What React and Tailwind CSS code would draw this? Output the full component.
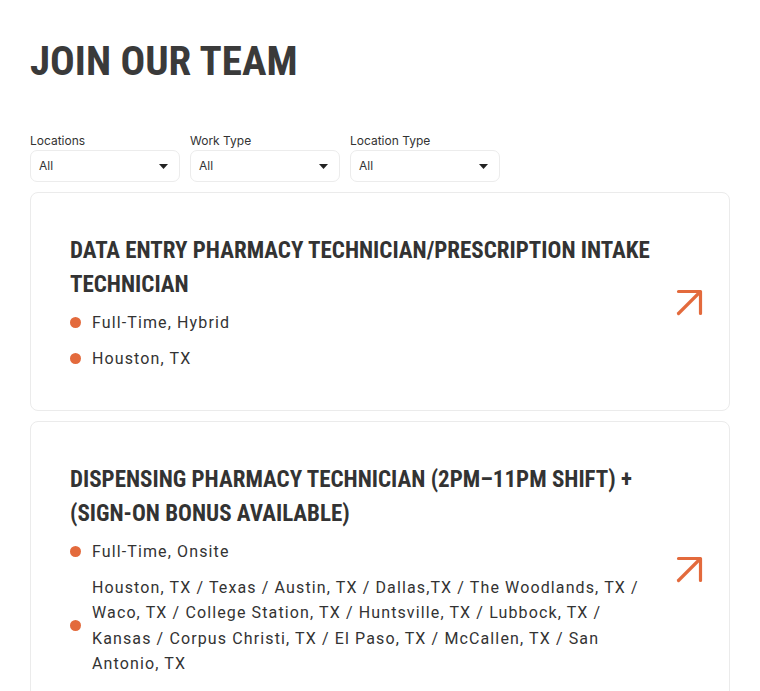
import React from "react";

const Caret = () => (
  <svg width="9" height="5" viewBox="0 0 9 5" className="shrink-0">
    <path d="M0 0 L9 0 L4.5 5 Z" fill="#222" />
  </svg>
);

const Arrow = () => (
  <svg width="27" height="27" viewBox="0 0 27 27" fill="none" stroke="#e36a3c" strokeWidth="3.2" strokeLinecap="round" strokeLinejoin="round">
    <path d="M2.5 24.5 L24 3" />
    <path d="M2.5 2.5 L24.5 2.5 L24.5 24.5" />
  </svg>
);

const Select = ({ label }) => (
  <div className="flex flex-col w-[150px]">
    <span className="text-[12px] leading-[16px] text-[#333] mb-[1px]" style={{ fontFamily: "Inter, Roboto, sans-serif" }}>{label}</span>
    <div className="h-[32px] rounded-[7px] border border-[#ececec] flex items-center justify-between pl-[8px] pr-[11px] bg-white">
      <span className="text-[12px] text-[#333]" style={{ fontFamily: "Inter, Roboto, sans-serif" }}>All</span>
      <Caret />
    </div>
  </div>
);

const Bullet = ({ children }) => (
  <div className="flex items-center gap-[11px]">
    <span className="w-[11px] h-[11px] rounded-full bg-[#e36a3c] shrink-0" />
    <span className="max-w-[550px] text-[16px] leading-[25.5px] tracking-[0.07em] text-[#333]" style={{ fontFamily: "Roboto, sans-serif" }}>{children}</span>
  </div>
);

const Card = ({ title, items }) => (
  <div className="rounded-[8px] border border-[#ebebeb] bg-white flex items-center pl-[39px] pr-[26px] pt-[41px] pb-[39px]">
    <div className="flex-1 max-w-[590px]">
      <h2 className="text-[23px] leading-[34px] font-bold uppercase text-[#333] mb-[8px]" style={{ fontFamily: "'Roboto Condensed', 'Liberation Sans Narrow', sans-serif" }}>{title}</h2>
      <div className="flex flex-col gap-[10px]">
        {items.map((it, i) => (
          <Bullet key={i}>{it}</Bullet>
        ))}
      </div>
    </div>
    <div className="ml-auto">
      <Arrow />
    </div>
  </div>
);

export default function App() {
  return (
    <div className="min-h-screen bg-white px-[30px] pt-[36px]">
      <h1 className="text-[41px] leading-[50px] font-bold text-[#3a3a3a] mb-[47px]" style={{ fontFamily: "'Roboto Condensed', 'Liberation Sans Narrow', sans-serif" }}>JOIN OUR TEAM</h1>
      <div className="flex gap-[10px] mb-[10px]">
        <Select label="Locations" />
        <Select label="Work Type" />
        <Select label="Location Type" />
      </div>
      <div className="flex flex-col gap-[10px]">
        <Card
          title="Data Entry Pharmacy Technician/Prescription Intake Technician"
          items={["Full-Time, Hybrid", "Houston, TX"]}
        />
        <Card
          title="Dispensing Pharmacy Technician (2PM–11PM Shift) + (Sign-On Bonus Available)"
          items={[
            "Full-Time, Onsite",
            "Houston, TX / Texas / Austin, TX / Dallas,TX / The Woodlands, TX / Waco, TX / College Station, TX / Huntsville, TX / Lubbock, TX / Kansas / Corpus Christi, TX / El Paso, TX / McCallen, TX / San Antonio, TX",
          ]}
        />
      </div>
    </div>
  );
}
